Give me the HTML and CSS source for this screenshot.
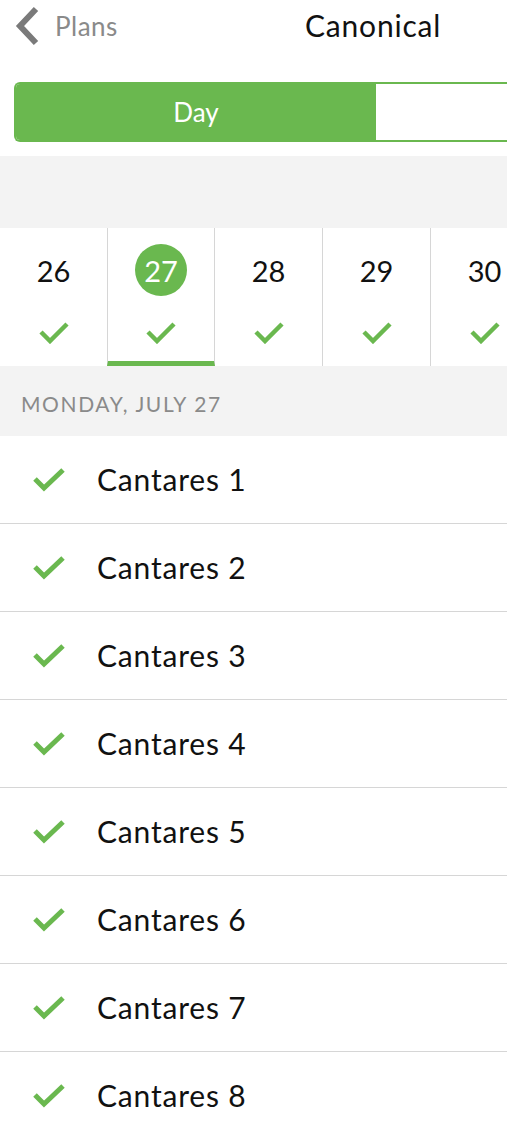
FILE: index.html
```html
<html lang="en">

<head>
    <meta charset="UTF-8">
    <meta name="viewport" content="width=device-width, initial-scale=1.0">
    <title>Canonical</title>
    <link rel="stylesheet" href="styles.css">
</head>

<body>
    <div class="navBar">
        <div class="backLink">
            <svg class="chevron" width="26" height="42" viewBox="0 0 26 42">
                <path d="M22 4 L6 21 L22 38" fill="none" stroke="#7a7a7a" stroke-width="6" />
            </svg>
            <span>Plans</span>
        </div>
        <div class="navTitle">Canonical</div>
    </div>

    <div class="segmentWrap">
        <div class="segment">
            <div class="segment-item segment-active">Day</div>
            <div class="segment-item"></div>
        </div>
    </div>

    <div class="greyBand"></div>

    <div class="dayStrip">
        <div class="dayCell">
            <div class="dayNum">26</div>
            <svg class="dayCheck" width="32" height="24" viewBox="0 0 32 24"><path d="M3 12 L12 21 L29 4" fill="none" stroke="#6ab84f" stroke-width="4.5" /></svg>
        </div>
        <div class="dayCell dayCell-active">
            <div class="dayNum"><span class="dayCircle">27</span></div>
            <svg class="dayCheck" width="32" height="24" viewBox="0 0 32 24"><path d="M3 12 L12 21 L29 4" fill="none" stroke="#6ab84f" stroke-width="4.5" /></svg>
        </div>
        <div class="dayCell">
            <div class="dayNum">28</div>
            <svg class="dayCheck" width="32" height="24" viewBox="0 0 32 24"><path d="M3 12 L12 21 L29 4" fill="none" stroke="#6ab84f" stroke-width="4.5" /></svg>
        </div>
        <div class="dayCell">
            <div class="dayNum">29</div>
            <svg class="dayCheck" width="32" height="24" viewBox="0 0 32 24"><path d="M3 12 L12 21 L29 4" fill="none" stroke="#6ab84f" stroke-width="4.5" /></svg>
        </div>
        <div class="dayCell">
            <div class="dayNum">30</div>
            <svg class="dayCheck" width="32" height="24" viewBox="0 0 32 24"><path d="M3 12 L12 21 L29 4" fill="none" stroke="#6ab84f" stroke-width="4.5" /></svg>
        </div>
    </div>

    <div class="sectionHeader">MONDAY, JULY 27</div>

    <div class="readingList">
        <div class="readingRow">
            <svg class="rowCheck" width="34" height="26" viewBox="0 0 34 26"><path d="M3 13 L12 22 L31 4" fill="none" stroke="#6ab84f" stroke-width="5" /></svg>
            <span>Cantares 1</span>
        </div>
        <div class="readingRow">
            <svg class="rowCheck" width="34" height="26" viewBox="0 0 34 26"><path d="M3 13 L12 22 L31 4" fill="none" stroke="#6ab84f" stroke-width="5" /></svg>
            <span>Cantares 2</span>
        </div>
        <div class="readingRow">
            <svg class="rowCheck" width="34" height="26" viewBox="0 0 34 26"><path d="M3 13 L12 22 L31 4" fill="none" stroke="#6ab84f" stroke-width="5" /></svg>
            <span>Cantares 3</span>
        </div>
        <div class="readingRow">
            <svg class="rowCheck" width="34" height="26" viewBox="0 0 34 26"><path d="M3 13 L12 22 L31 4" fill="none" stroke="#6ab84f" stroke-width="5" /></svg>
            <span>Cantares 4</span>
        </div>
        <div class="readingRow">
            <svg class="rowCheck" width="34" height="26" viewBox="0 0 34 26"><path d="M3 13 L12 22 L31 4" fill="none" stroke="#6ab84f" stroke-width="5" /></svg>
            <span>Cantares 5</span>
        </div>
        <div class="readingRow">
            <svg class="rowCheck" width="34" height="26" viewBox="0 0 34 26"><path d="M3 13 L12 22 L31 4" fill="none" stroke="#6ab84f" stroke-width="5" /></svg>
            <span>Cantares 6</span>
        </div>
        <div class="readingRow">
            <svg class="rowCheck" width="34" height="26" viewBox="0 0 34 26"><path d="M3 13 L12 22 L31 4" fill="none" stroke="#6ab84f" stroke-width="5" /></svg>
            <span>Cantares 7</span>
        </div>
        <div class="readingRow">
            <svg class="rowCheck" width="34" height="26" viewBox="0 0 34 26"><path d="M3 13 L12 22 L31 4" fill="none" stroke="#6ab84f" stroke-width="5" /></svg>
            <span>Cantares 8</span>
        </div>
    </div>
</body>

</html>
```

FILE: styles.css
```css
body {
    margin: 0;
    background-color: white;
    font-family: Lato, "Noto Sans", sans-serif;
    color: #111;
    overflow: hidden;
}

.navBar {
    height: 52px;
    display: flex;
    align-items: center;
}

.backLink {
    width: 305px;
    display: flex;
    align-items: center;
    color: #8a8a8a;
    font-size: 26px;
    letter-spacing: 0.5px;
    padding-left: 14px;
    box-sizing: border-box;
}

.chevron {
    margin-right: 15px;
}

.navTitle {
    font-size: 30px;
    letter-spacing: 0.8px;
    color: #111;
    padding-bottom: 3px;
}

.segmentWrap {
    padding: 30px 0 14px 14px;
    overflow: hidden;
}

.segment {
    height: 60px;
    display: flex;
    border: 2px solid #6ab84f;
    border-right: none;
    border-radius: 6px 0 0 6px;
    box-sizing: border-box;
    overflow: hidden;
}

.segment-item {
    flex: 1;
    display: flex;
    align-items: center;
    justify-content: center;
    font-size: 26px;
    background-color: white;
}

.segment-active {
    flex: 0 0 360px;
    background-color: #6ab84f;
    color: white;
}

.greyBand {
    height: 72px;
    background-color: #f3f3f3;
}

.dayStrip {
    height: 138px;
    display: flex;
    overflow: hidden;
}

.dayCell {
    flex: 0 0 108px;
    border-right: 1px solid #d6d6d6;
    box-sizing: border-box;
    display: flex;
    flex-direction: column;
    align-items: center;
    padding-top: 15px;
}

.dayCell-active {
    border-left: 1px solid #d6d6d6;
    margin-left: -1px;
    border-bottom: 5px solid #6ab84f;
}

.dayNum {
    height: 54px;
    display: flex;
    align-items: center;
    font-size: 29px;
}

.dayCircle {
    width: 52px;
    height: 52px;
    border-radius: 50%;
    background-color: #6ab84f;
    color: white;
    display: flex;
    align-items: center;
    justify-content: center;
}

.dayCheck {
    margin-top: 23px;
}

.sectionHeader {
    height: 70px;
    background-color: #f3f3f3;
    color: #8a8a8a;
    font-size: 21px;
    letter-spacing: 1.6px;
    padding-left: 21px;
    padding-top: 5px;
    display: flex;
    align-items: center;
    box-sizing: border-box;
}

.readingList {
    border-radius: 6px 0 0 0;
    background-color: white;
}

.readingRow {
    height: 88px;
    border-bottom: 1px solid #d6d6d6;
    box-sizing: border-box;
    display: flex;
    align-items: center;
    font-size: 30px;
    letter-spacing: 0.8px;
    color: #111;
    padding-bottom: 2px;
}

.rowCheck {
    margin-left: 32px;
    margin-right: 31px;
}
```
